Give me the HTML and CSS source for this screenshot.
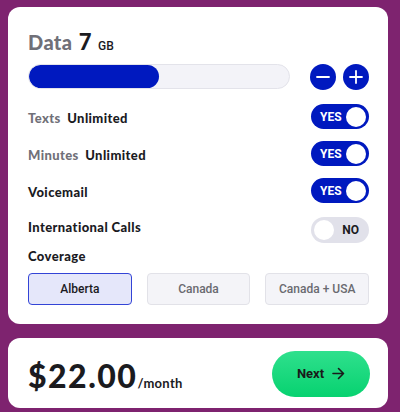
FILE: index.html
```html
<!DOCTYPE html>
<html lang="en">
<head>
  <meta charset="utf-8">
  <title>Build your plan</title>
  <link rel="stylesheet" href="styles.css">
</head>
<body>

<div id="plan" class="card">
  <div class="dataTitle">
    <span class="muted">Data</span> <span class="amount">7</span> <span class="unit">GB</span>
  </div>

  <div class="dataRow">
    <div class="bar"><div class="fill" style="width: 50%"></div></div>
    <button class="round">
      <svg width="14" height="14" viewBox="0 0 14 14"><path d="M1 7h12" stroke="#fff" stroke-width="1.8" stroke-linecap="round"/></svg>
    </button>
    <button class="round">
      <svg width="14" height="14" viewBox="0 0 14 14"><path d="M1 7h12M7 1v12" stroke="#fff" stroke-width="1.8" stroke-linecap="round"/></svg>
    </button>
  </div>

  <div class="option first">
    <div class="label"><span class="muted">Texts</span> Unlimited</div>
    <div class="toggle on"><span>YES</span><i></i></div>
  </div>
  <div class="option">
    <div class="label"><span class="muted">Minutes</span> Unlimited</div>
    <div class="toggle on"><span>YES</span><i></i></div>
  </div>
  <div class="option">
    <div class="label">Voicemail</div>
    <div class="toggle on"><span>YES</span><i></i></div>
  </div>
  <div class="option intl">
    <div class="label">International Calls</div>
    <div class="toggle off"><i></i><span>NO</span></div>
  </div>

  <div class="coverageTitle">Coverage</div>
  <div class="coverage">
    <button class="zone selected">Alberta</button>
    <button class="zone">Canada</button>
    <button class="zone">Canada + USA</button>
  </div>
</div>

<div id="checkout" class="card">
  <div class="price">$22.00<span class="per">/month</span></div>
  <button class="next">Next
    <svg width="13" height="13" viewBox="0 0 13 13"><path d="M1 6.5h10.5M6.5 1.5l5 5-5 5" fill="none" stroke="#1a1a1a" stroke-width="1.6" stroke-linecap="round" stroke-linejoin="round"/></svg>
  </button>
</div>

</body>
</html>
```

FILE: styles.css
```css
html, body {
  margin: 0;
  height: 100%;
}

body {
  background-color: #7e236f;
  padding: 7px 12px 0 8px;
  box-sizing: border-box;
  font-family: Lato, "Open Sans", sans-serif;
  color: #1b1b1f;
}

.card {
  background-color: #ffffff;
  border-radius: 12px;
  box-sizing: border-box;
}

#plan {
  height: 317px;
  padding: 23px 19px 0 20px;
}

.muted {
  color: #707078;
}

.dataTitle {
  font-weight: 900;
  font-size: 20px;
  line-height: 24px;
  height: 24px;
  letter-spacing: 0.4px;
  word-spacing: 1px;
}

.amount {
  color: #1b1b1f;
  font-size: 22px;
}

.unit {
  font-family: Roboto, sans-serif;
  font-weight: 500;
  font-size: 12px;
  letter-spacing: 0;
}

.dataRow {
  display: flex;
  align-items: center;
  margin-top: 9px;
  height: 27px;
}

.bar {
  flex: 1;
  height: 25px;
  border-radius: 13px;
  background-color: #f3f3f8;
  border: 1px solid #e3e3ea;
  box-sizing: border-box;
  margin-right: 13px;
  overflow: hidden;
}

.fill {
  height: 100%;
  background-color: #0019bf;
  border-radius: 13px;
}

.round {
  width: 26px;
  height: 26px;
  border-radius: 50%;
  border: none;
  padding: 0;
  background-color: #0019bf;
  display: flex;
  align-items: center;
  justify-content: center;
  margin-left: 7px;
}

.option {
  display: flex;
  justify-content: space-between;
  align-items: center;
  height: 25px;
  margin-top: 12px;
}

.option.first {
  margin-top: 14px;
}

.option.intl {
  margin-top: 14px;
}

.label {
  font-weight: 900;
  font-size: 13px;
  padding-top: 3px;
  letter-spacing: 0.4px;
}

.label .muted {
  margin-right: 3px;
}

.option.intl .label {
  padding-top: 0;
  margin-top: -6px;
}

.toggle {
  width: 58px;
  height: 25px;
  border-radius: 13px;
  box-sizing: border-box;
  display: flex;
  align-items: center;
  justify-content: space-between;
  padding: 0 3px 0 9px;
  font-family: Roboto, sans-serif;
  font-weight: 700;
  font-size: 12px;
}

.toggle i {
  width: 20px;
  height: 20px;
  border-radius: 50%;
  background-color: #ffffff;
}

.toggle.on {
  background-color: #0019bf;
  color: #ffffff;
}

.toggle.off {
  background-color: #e1e1ea;
  color: #1b1b1f;
  padding: 0 10px 0 3px;
  height: 26px;
}

.coverageTitle {
  font-weight: 900;
  font-size: 13px;
  margin-top: 6px;
  line-height: 16px;
  letter-spacing: 0.4px;
}

.coverage {
  display: flex;
  gap: 15px;
  margin-top: 9px;
}

.zone {
  flex: 1;
  height: 32px;
  border-radius: 4px;
  border: 1px solid #e2e2e8;
  background-color: #f4f4f8;
  color: #6a6a70;
  font-family: Roboto, sans-serif;
  font-weight: 500;
  font-size: 12px;
  padding: 0;
}

.zone.selected {
  background-color: #e5e7fa;
  border-color: #3344d6;
  color: #1b1b1f;
}

#checkout {
  margin-top: 14px;
  height: 70px;
  display: flex;
  align-items: center;
  justify-content: space-between;
  padding: 0 18px 0 20px;
}

.price {
  font-weight: 900;
  font-size: 32px;
  letter-spacing: 1.5px;
  padding-top: 4px;
}

.per {
  font-size: 13px;
  font-weight: 700;
  letter-spacing: 0.3px;
}

.next {
  width: 98px;
  height: 46px;
  border: none;
  border-radius: 23px;
  background: linear-gradient(#2fe08d, #07d270);
  font-family: Roboto, sans-serif;
  font-weight: 700;
  font-size: 13px;
  color: #1a1a1a;
  display: flex;
  align-items: center;
  justify-content: center;
  gap: 8px;
  margin-top: 1px;
}
```
